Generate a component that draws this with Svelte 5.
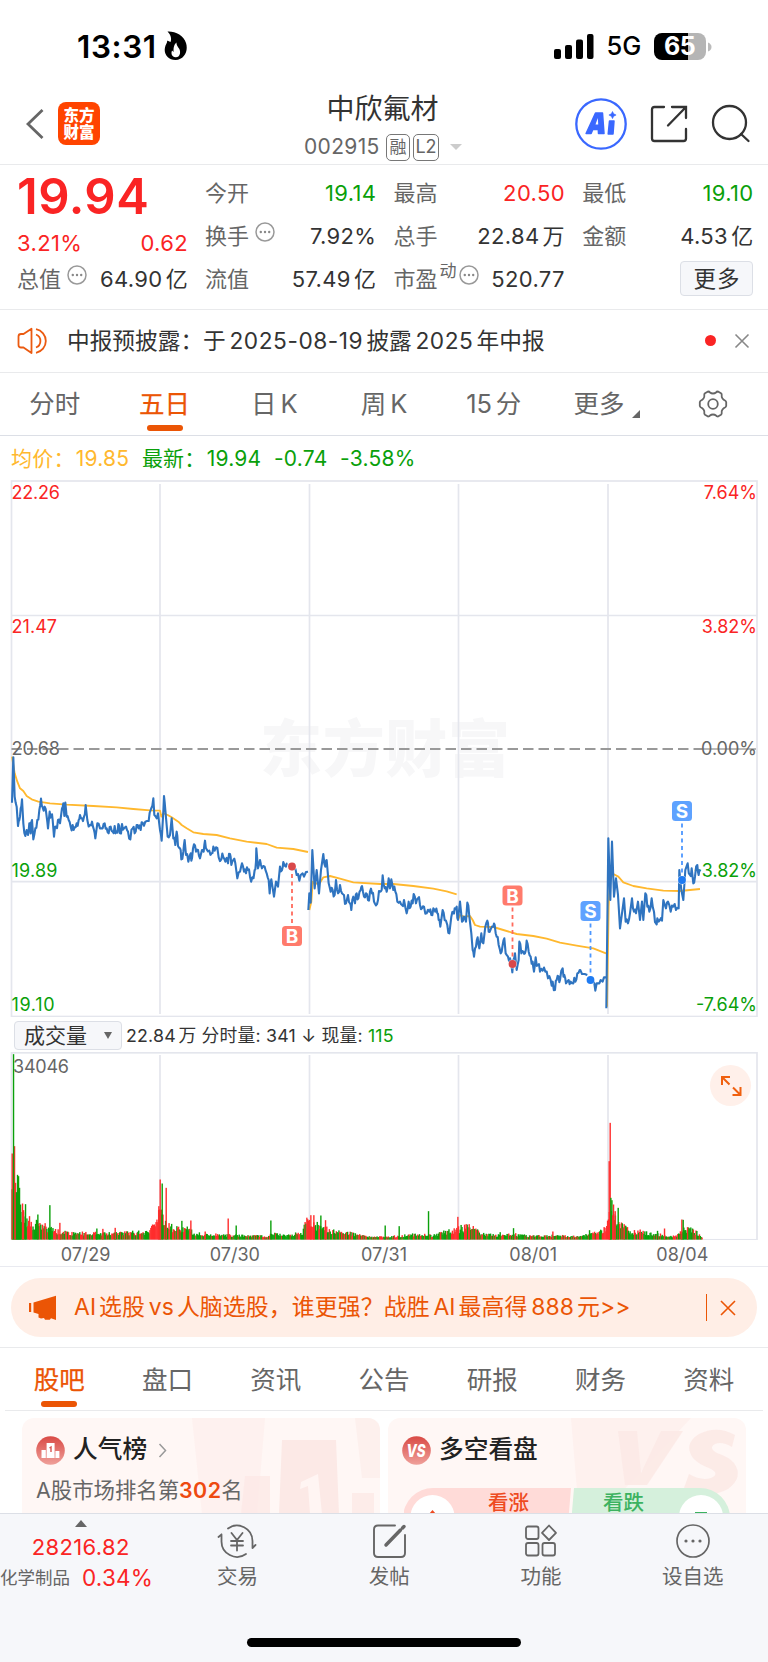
<script>
  const split = (t) => t.match(/[\u2190-\u2193\u3000-\u9fff\uff00-\uffef]+|[^\u2190-\u2193\u3000-\u9fff\uff00-\uffef]+/g);
  const isLatin = (t) => /^[\x20-\x7e]+$/.test(t);

  const quotes = [
    { label: '今开', value: '19.14', tone: 'down' },
    { label: '最高', value: '20.50', tone: 'up' },
    { label: '最低', value: '19.10', tone: 'down' },
    { label: '换手', value: '7.92%', info: true },
    { label: '总手', value: '22.84万' },
    { label: '金额', value: '4.53亿' },
    { label: '流值', value: '57.49亿' },
    { label: '市盈', value: '520.77', sup: '动', info: true }
  ];
  const periods = ['分时', '五日', '日K', '周K', '15分', '更多'];
  const sections = ['股吧', '盘口', '资讯', '公告', '研报', '财务', '资料'];
  const dates = ['07/29', '07/30', '07/31', '08/01', '08/04'];
  const gridX = [160, 309.5, 458.5, 608];

  // Series are stored at three units per pixel.
  const rand = (n) => {
    const v = Math.sin(n * 12.9898 + 4.137) * 43758.5453;
    return v - Math.floor(v);
  };
  const shift = (s, dx) => s.split(' ').map((p) => {
    const [x, y] = p.split(',').map(Number);
    return [x + dx, y];
  });
  const plain = (pts) => pts.map((p) => p.join(',')).join(' ');
  const dense = (pts) => {
    const out = [];
    pts.forEach((p, i) => {
      out.push(p);
      const q = pts[i + 1];
      if (q && q[0] - p[0] > 3 && Math.abs(q[1] - p[1]) < 45) {
        const j = (rand(p[0] + 3) - 0.5) * 30;
        out.push([(p[0] + q[0]) / 2, (p[1] + q[1]) / 2 + j]);
      }
    });
    return plain(out);
  };

  const price = [
    dense(shift('36,248 40,112 44,230 50,260 54,318 58,300 62,265 66,238 70,310 76,348 80,330 84,345 88,310 92,340 96,300 100,358 106,325 112,300 118,270 123,236 128,262 134,260 140,290 144,325 149,275 154,290 158,300 162,350 168,320 174,300 180,310 186,265 190,250 193,288 196,248 200,290 206,300 212,320 218,315 224,322 230,310 236,300 240,285 246,295 252,290 257,255 262,300 270,315 276,305 282,330 286,355 292,310 300,325 308,325 314,310 320,325 326,340 332,320 338,335 344,318 350,335 355,312 360,340 366,312 372,325 378,320 384,335 391,358 398,325 404,340 410,315 416,325 422,330 428,308 436,305 446,303 452,270 457,258 460,235 463,285 470,295 474,280 480,330 485,362 490,275 492,228 496,270 503,350 510,345 515,295 520,355 526,375 530,335 534,378 540,385 544,418 550,395 554,360 558,405 565,425 572,400 576,415 582,373 588,395 594,390 600,415 606,390 611,395 615,362 620,388 628,392 635,400 640,380 648,382 656,412 664,418 670,412 676,425 684,430 690,402 694,435 700,420 706,430 712,475 720,455 726,430 732,455 738,460 744,450 750,470 757,472 764,450 768,425 769,385 774,445 780,420 786,445 794,440 800,460 806,480 809,520 814,478 822,530 828,485 834,500 840,440 846,450 850,426 858,440 862,432', 0)),
    plain(shift('886,445 890,465 894,462 898,482 902,465 908,460 912,470 918,456 924,455', 0)),
    dense(shift('25,570 28,520 32,548 37,390 44,505 50,450 57,520 63,450 70,402 76,440 80,420 86,490 92,515 98,510 104,525 108,480 114,520 120,495 126,520 132,525 138,550 144,525 150,550 154,570 160,530 165,550 170,520 175,535 182,510 186,498 192,530 198,520 204,540 210,515 216,520 222,545 228,556 234,540 240,515 245,510 248,466 254,505 260,515 266,475 270,505 274,478 280,510 286,515 292,545 300,545 306,555 312,540 320,580 326,545 332,560 338,550 341,522 348,550 354,535 360,555 366,565 372,560 380,580 388,575 394,585 400,565 406,575 412,580 416,600 421,620 428,570 434,600 442,615 448,640 454,590 460,575 464,565 470,560 474,600 480,545 486,605 492,590 498,605 502,548 508,590 514,640 518,690 522,710 528,680 533,652 538,685 544,640 550,670 556,620 562,602 566,635 572,628 580,620 584,615 590,650 596,675 602,700 608,675 613,655 617,700 624,710 630,715 637,757 640,720 645,700 650,750 656,720 658,665 664,700 670,695 675,700 680,662 686,695 692,710 698,725 702,755 707,712 714,735 720,755 728,752 736,755 744,775 752,780 758,785 765,810 770,780 776,770 780,780 788,745 793,765 798,790 806,780 812,785 820,790 826,785 832,760 840,748', 900)),
    plain(shift('840,748 843,755 846,762 854,762 862,765', 900)),
    plain(shift('880,785 883,790 886,812 890,790 898,790 902,780 908,785 912,772 918,772', 900)),
    dense(shift('139,865 145,355 151,540 156,365 162,530 168,475 174,525 180,625 186,580 192,535 197,605 204,610 210,580 216,535 222,575 228,580 234,545 240,600 246,545 250,600 256,520 262,560 268,575 275,535 282,575 288,610 292,595 300,600 306,602 310,540 318,565 324,545 332,575 340,560 348,570 356,565 358,450 364,510 370,540 376,450 383,430 390,465 395,445 400,490 405,470 412,435 416,465 420,455', 1680))
  ];

  const average = [
    plain(shift('36,110 44,160 52,185 60,205 70,213 80,228 95,238 115,245 150,250 200,254 280,258 350,262 400,267 450,271 480,272 484,290 490,280 503,285 515,292 535,305 545,315 560,325 580,337 610,342 650,345 690,355 740,365 800,372 830,383 880,387 924,396', 0)),
    plain(shift('28,570 34,545 38,485 44,492 60,488 70,472 90,468 120,476 160,487 240,492 280,492 340,498 400,506 440,514 470,523', 900)),
    plain(shift('474,600 480,585 490,590 510,588 518,600 525,615 540,620 580,621 610,630 650,642 700,648 740,656 780,668 830,677 880,685 918,700', 900)),
    plain(shift('141,860 146,560 150,480 160,462 175,470 190,487 220,498 260,505 310,512 360,513 390,510 420,507', 1680))
  ];

  const envelope = [[36, 150], [60, 100], [72, 75], [90, 55], [110, 58], [130, 48], [160, 34], [190, 24], [250, 22], [340, 20], [400, 25], [440, 24], [455, 42], [470, 66], [482, 100], [492, 70], [505, 50], [520, 40], [555, 40], [590, 20], [640, 17], [700, 15], [800, 11], [830, 24], [850, 15], [905, 22], [920, 62], [945, 54], [970, 40], [1000, 28], [1050, 22], [1100, 10], [1150, 9], [1200, 13], [1250, 18], [1300, 14], [1340, 28], [1370, 34], [1385, 42], [1420, 42], [1440, 20], [1500, 14], [1540, 18], [1600, 12], [1660, 14], [1740, 10], [1780, 25], [1810, 30], [1824, 60], [1834, 115], [1850, 65], [1870, 45], [1890, 28], [1930, 24], [1970, 20], [2000, 11], [2030, 12], [2050, 34], [2065, 38], [2080, 30], [2100, 17], [2108, 7]];
  const level = (x) => {
    let i = 0;
    while (i < envelope.length - 2 && envelope[i + 1][0] < x) i++;
    const [a, b] = [envelope[i], envelope[i + 1]];
    return a[1] + ((b[1] - a[1]) * (x - a[0])) / (b[0] - a[0]);
  };
  const spikes = [[36, 258, 1], [43, 280, 1], [46, 170, 1], [49, 142, 0], [52, 194, 0], [55, 190, 0], [58, 155, 0], [61, 105, 0], [67, 108, 1], [70, 88, 1], [76, 106, 0], [88, 70, 1], [113, 75, 0], [149, 103, 0], [179, 50, 1], [290, 33, 0], [308, 32, 1], [345, 35, 1], [476, 100, 1], [480, 180, 1], [486, 168, 0], [498, 155, 1], [545, 56, 0], [572, 57, 1], [615, 24, 1], [684, 63, 1], [708, 42, 0], [812, 57, 0], [932, 73, 1], [941, 73, 1], [962, 72, 0], [976, 58, 1], [1155, 42, 0], [1197, 40, 0], [1285, 85, 0], [1373, 68, 1], [1398, 46, 1], [1407, 46, 1], [1540, 34, 0], [1500, 22, 0], [1658, 24, 1], [1768, 28, 0], [1827, 235, 1], [1830, 350, 1], [1832, 125, 0], [1840, 105, 1], [1845, 85, 1], [1854, 95, 0], [1872, 46, 1], [1920, 30, 1], [1972, 26, 0], [1993, 33, 1], [2045, 60, 1], [2049, 59, 0], [2062, 37, 1], [40, 556, 0]];
  const reds = [[82, 90], [448, 478], [918, 944], [1352, 1376], [1806, 1828]];
  const bars = [];
  for (let i = 0, x = 36; x < 2108; i++, x += 2.6) {
    const h = Math.max(6, level(x) * (0.5 + 0.6 * rand(i * 1.7 + 9)));
    const red = reds.some(([a, b]) => x > a && x < b) || (x > 90 && rand(i * 3.1 + 2) < 0.36);
    bars.push([x, h, red ? 1 : 0]);
  }
  bars.push(...spikes);

  const markers = [
    { x: 292, dot: 866.5, tag: 936, t: 'B' },
    { x: 512.5, dot: 964, tag: 895.5, t: 'B' },
    { x: 590.5, dot: 980, tag: 911, t: 'S' },
    { x: 682, dot: 880, tag: 811, t: 'S' }
  ];
  const scale = [
    ['22.26', '7.64%', 499, 'up', 48.5],
    ['21.47', '3.82%', 633, 'up', 45.5],
    ['20.68', '0.00%', 755, 'flat', 48.5],
    ['19.89', '-3.82%', 876.5, 'down', 46],
    ['19.10', '-7.64%', 1010.5, 'down', 43]
  ];
</script>

{#snippet mixed(t)}{#each split(t) as p, i}<span class:lat={isLatin(p)} class:gl={i > 0 && isLatin(p) && p[0] !== '>'} class:gr={i < split(t).length - 1 && isLatin(p)}>{p}</span>{/each}{/snippet}

{#snippet info()}
  <svg class="info" width="20" height="20" viewBox="0 0 20 20"><circle cx="10" cy="10" r="9" fill="none" stroke="#999" stroke-width="1.500" /><g fill="#888"><circle cx="5.8" cy="10" r="1.200" /><circle cx="10" cy="10" r="1.200" /><circle cx="14.2" cy="10" r="1.200" /></g></svg>
{/snippet}

<div class="screen">
  <div class="status">
    <span class="clock">13:31</span>
    <svg class="flame" width="24" height="30" viewBox="0 0 24 30"><path d="M3.5 0.5C11 0 20 4.500 22 12c2.500 8-1.500 16.500-10.500 17C4 29-.5 23 1 16.500 1.500 13.500 3.300 12 3.200 9.500L6.500 11C8 7 6.500 3.500 3.500.5Z" /><path fill="#fff" d="M12.500 11.500C12 16 17 17 16 22.500 15.300 25.500 13.500 26.500 11.500 26.300 8 26 6.700 22.500 8 19.500L9.600 21C9.500 17.500 9.500 14 12.500 11.500Z" /></svg>
    <svg class="signal" width="40" height="26" viewBox="0 0 40 26"><rect x="0" y="15" width="7" height="10" rx="2" /><rect x="11" y="11" width="7" height="14" rx="2" /><rect x="22" y="5.500" width="7" height="19.500" rx="2" /><rect x="33" y="0" width="6.500" height="25" rx="2" /></svg>
    <span class="net">5G</span>
    <span class="battery">65</span>
    <svg class="nub" width="6" height="10" viewBox="0 0 6 10"><path d="M1 0.500Q4.500 2 4.500 5T1 9.500Z" fill="#bbb" /></svg>
  </div>

  <header>
    <svg class="back" width="18" height="32" viewBox="0 0 18 32"><path d="M16.500 2 2 16 16.500 30" fill="none" stroke="#666" stroke-width="2.800" /></svg>
    <div class="logo"><span>东方</span><span>财富</span></div>
    <div class="name">
      <h1>中欣氟材</h1>
      <div class="code"><span>002915</span><i>融</i><i class="l2">L2</i><b></b></div>
    </div>
    <div class="tools">
      <svg width="52" height="52" viewBox="0 0 52 52"><circle cx="26" cy="26" r="24.700" fill="none" stroke="#3a68ff" stroke-width="2.300" /><g fill="#3a68ff" stroke="#3a68ff" stroke-linejoin="round"><path d="M20.500 15h7l1.500 20.500h-5.500l-.2-4h-5.500l-1.700 4h-5Z" stroke-width="1.500" /><path d="M34.500 23h4.500l-1 13h-4.800Z" stroke-width="1.500" /><path d="m37.500 13.500 1.200 2.300 2.400 1.200-2.400 1.200-1.200 2.400-1.200-2.400-2.400-1.200 2.400-1.200Z" stroke-width=".6" /></g><path d="M20.500 26.500 22.800 20l.4 6.500Z" fill="#fff" /></svg>
      <svg width="38" height="38" viewBox="0 0 38 38" fill="none" stroke="#333" stroke-width="2.300" stroke-linecap="round"><path d="M14 2H4.500Q2 2 2 4.500V33.500Q2 36 4.500 36h29q2.500 0 2.500-2.500V24M22 2h14V13M36 2 18 20.500" /></svg>
      <svg width="40" height="40" viewBox="0 0 40 40" fill="none" stroke="#333" stroke-width="2.300" stroke-linecap="round"><circle cx="18.500" cy="18.500" r="16.500" /><path d="m30 30 7.500 7" /></svg>
    </div>
  </header>

  <section class="quote">
    <div class="last">
      <strong>19.94</strong>
      <div class="pair up"><span>3.21%</span><span>0.62</span></div>
      <div class="pair cap"><span class="label">总值{@render info()}</span><span class="num">{@render mixed('64.90亿')}</span></div>
    </div>
    <div class="cells">
      {#each quotes as q}
        <div class="cell"><span class="label">{q.label}{#if q.sup}<sup>{q.sup}</sup>{/if}{#if q.info}{@render info()}{/if}</span><span class="num {q.tone}">{@render mixed(q.value)}</span></div>
      {/each}
      <div class="cell"><button class="more">更多</button></div>
    </div>
  </section>

  <div class="notice">
    <svg width="32" height="28" viewBox="0 0 32 28" fill="none" stroke="#eb5a10" stroke-width="1.800" stroke-linejoin="round"><path d="M14.500 1.800V26L6.500 20.500H4q-2.500 0-2.500-2.500v-8.500Q1.500 7 4 7h2.500ZM19 7.500a7 7 0 0 1 0 13M19 2.200a12 12 0 0 1 0 23.600" /></svg>
    <p>{@render mixed('中报预披露：于2025-08-19披露2025年中报')}</p>
    <em></em>
    <svg width="16" height="16" viewBox="0 0 16 16"><path d="m1.500 1.500 13 13m0-13-13 13" stroke="#888" stroke-width="1.600" /></svg>
  </div>

  <nav class="periods">
    {#each periods as p, i}
      <div class="tab" class:active={i === 1} class:menu={i === 5}><span>{@render mixed(p)}</span>{#if i === 5}<svg width="8" height="8" viewBox="0 0 8 8"><path d="M8 0v8H0Z" fill="#666" /></svg>{/if}</div>
    {/each}
    <div class="tab"><svg class="gear" width="30" height="28" viewBox="0 0 30 28" fill="none" stroke="#666" stroke-width="1.800" stroke-linejoin="round"><path d="M10 1.500q1.500 0 2 1 1.200 1 3 1t3-1q.5-1 2-1l3 1.800q1 .8.700 2.200-.3 1.500.8 3t2.500 2q1 .5 1.200 1.600v3.800q-.2 1.100-1.200 1.600-1.400.5-2.500 2t-.8 3q.3 1.400-.7 2.200l-3 1.800q-1.500 0-2-1-1.200-1-3-1t-3 1q-.5 1-2 1l-3-1.800q-1-.8-.7-2.200.3-1.500-.8-3t-2.500-2q-1-.5-1.200-1.600v-3.800q.2-1.100 1.200-1.600 1.400-.5 2.500-2t.8-3q-.3-1.400.7-2.200Z" /><circle cx="15" cy="14" r="4.800" /></svg></div>
  </nav>

  <div class="legend"><span class="avg">均价：<u>19.85</u></span><span>最新：<u>19.94</u></span><span>-0.74</span><span>-3.58%</span></div>

  <svg class="chart" width="768" height="537" viewBox="0 480 768 537">
    <text x="260" y="772" class="mark" textLength="250">东方财富</text>
    <g stroke="#e4e6ed" stroke-width="1.700" fill="none">
      <rect x="11.500" y="481" width="745.500" height="535.500" />
      {#each gridX as x}<path d="M{x} 484V1014" />{/each}
      <path d="M11 615.500H757M11 881.700H757" />
    </g>
    <path d="M11.500 749H702" stroke="#999" stroke-width="1.900" stroke-dasharray="10.500 5" />
    <path d="M702 749H756" stroke="#777" stroke-width="1.200" />
    {#each scale as [l, r, y, tone, w]}
      <text x="11.500" {y} class={tone} textLength={w}>{l}</text>
      <text x="757" {y} class={tone} text-anchor="end">{r}</text>
    {/each}
    <g transform="translate(0 720) scale(.33333)" fill="none" stroke-linejoin="round">
      {#each average as p}<polyline points={p} stroke="#ffb82e" stroke-width="5.500" />{/each}
      {#each price as p}<polyline points={p} stroke="#2f74c0" stroke-width="6.300" />{/each}
    </g>
    {#each markers as m}
      {@const buy = m.t === 'B'}
      <path d="M{m.x} {m.dot}V{m.tag}" stroke={buy ? '#ff6a5c' : '#4d97ff'} stroke-width="1.800" stroke-dasharray="4 3.500" />
      <circle cx={m.x} cy={m.dot} r="4.600" fill="#fff" opacity=".7" />
      <circle cx={m.x} cy={m.dot} r="3.900" fill={buy ? '#d9484a' : '#1f7bf2'} />
      <rect x={m.x - 10} y={m.tag - 10} width="20" height="20" rx="3.500" fill={buy ? '#ff7b6c' : '#5ea2ff'} />
      <text x={m.x} y={m.tag + 7} class="tag" text-anchor="middle">{m.t}</text>
    {/each}
  </svg>

  <div class="volbar">
    <button>成交量<b></b></button>
    <p>{@render mixed('22.84万')} 分时量: 341 ↓ 现量: <span class="down">115</span></p>
  </div>

  <div class="volume">
    <svg width="768" height="188" viewBox="0 1052 768 188">
      <g stroke="#e4e6ed" stroke-width="1.700" fill="none">
        <rect x="11.500" y="1052.800" width="745.500" height="187" />
        {#each gridX as x}<path d="M{x} 1055V1239" />{/each}
      </g>
      <text x="13" y="1072.500" class="flat" textLength="56">34046</text>
      <g transform="translate(0 1239.500) scale(.33333)">
        {#each bars as [x, h, red]}<rect x={x - 1.5} y={-h} width="4.200" height={h} fill={red ? '#ff2d2d' : '#0aa00a'} />{/each}
      </g>
    </svg>
    <span class="expand"><svg width="22" height="22" viewBox="0 0 22 22" fill="none" stroke="#f0600f" stroke-width="2"><path d="M2 10V2h8M2 2l7.500 7.500M12.500 20h8v-8M20.500 20 13 12.500" /></svg></span>
  </div>
  <div class="dates">{#each dates as d}<span>{d}</span>{/each}</div>

  <div class="promo">
    <div class="pill">
      <svg width="28" height="26" viewBox="0 0 28 26" fill="#eb5505"><path d="M0 8h2.200v9H0ZM4.500 7.500 27 .8V25l-5-1.800-1.200 1.600H16l-1-1.800-3 .6-2.500-1.100V19l-5-1.500Z" /></svg>
      <p>{@render mixed('AI选股vs人脑选股，谁更强？战胜AI最高得888元>>')}</p>
      <i></i>
      <svg width="16" height="16" viewBox="0 0 16 16"><path d="m1 1 14 14m0-14-14 14" stroke="#eb5505" stroke-width="1.600" /></svg>
    </div>
  </div>

  <nav class="sections">
    {#each sections as s, i}<div class="tab" class:active={i === 0}><span>{s}</span></div>{/each}
  </nav>

  <div class="cards">
    <article>
      <svg class="art" width="358" height="96" viewBox="0 0 358 96" fill="#fce9e6"><path d="M170 0h73l-8 96h-55Z" opacity=".4" /><path d="M223 58h25v38h-29Z" opacity=".8" /><path d="M260 22h54l3 74h-60Z" /><path d="M279 64l17-8 4 40h-12l-2-28-8 3Z" fill="#fff5f3" /><path d="M333 0h25v60h-18Z" opacity=".5" /><path d="M330 75h22v21h-22Z" opacity=".8" /></svg>
      <h2><svg width="29" height="29" viewBox="0 0 29 29"><defs><linearGradient id="badge" x2="0" y2="1"><stop stop-color="#d94a45" /><stop offset="1" stop-color="#efa09a" /></linearGradient></defs><circle cx="14.500" cy="14.500" r="14.300" fill="url(#badge)" /><path fill="#fff" d="M5.500 14h4.300v8H5.500ZM10.600 7h8v15h-8ZM19.400 15h4v7h-4Z" /><path d="m13.500 12 1.500-1v5" fill="none" stroke="#d95550" stroke-width="1.400" /></svg>人气榜<svg class="go" width="9" height="15" viewBox="0 0 9 15"><path d="m1.500 1 6 6.500-6 6.500" fill="none" stroke="#999" stroke-width="1.500" /></svg></h2>
      <p>A股市场排名第<b>302</b>名</p>
    </article>
    <article>
      <svg class="art" width="358" height="96" viewBox="0 0 358 96" fill="#fce9e6"><path d="M183 0h120l-90 96h-22Z" opacity=".45" /><path d="M230 13h19l4 42 20-42h22l-36 54h-22Z" opacity=".9" /><path d="M347 17q-18-10-36-1-16 10-6 24 5 6 18 11 9 5 0 9-10 3-22-4l-5 14q24 12 44 1 16-12 6-26-5-6-17-10-9-5-2-9 7-3 17 3Z" opacity=".9" /></svg>
      <h2><svg width="29" height="29" viewBox="0 0 29 29"><circle cx="14.500" cy="14.500" r="14.300" fill="url(#badge)" /><text x="14" y="20.500" text-anchor="middle" class="vs" textLength="19" lengthAdjust="spacingAndGlyphs">VS</text></svg>多空看盘</h2>
      <div class="vote"><svg width="326" height="60" viewBox="0 0 326 60"><path d="M29 0H167L162 60H29A29 29 0 0 1 29 0Z" fill="#ffdbd8" /><path d="M170 0H296a29 29 0 0 1 0 60H165Z" fill="#d5f0dc" /><circle cx="28.500" cy="29" r="22" fill="#fff" /><circle cx="297" cy="29" r="22" fill="#fff" /><path d="m28.500 22 8 9h-16Z" fill="#ee4a20" /><path d="M291 24h12v3h-12Z" fill="#3cb260" /></svg><span class="bull">看涨</span><span class="bear">看跌</span></div>
    </article>
  </div>

  <footer>
    <div class="bar">
      <div class="index"><b></b><strong>28216.82</strong><p>化学制品<span>0.34%</span></p></div>
      <div class="item"><svg width="40" height="34" viewBox="0 0 40 34" fill="none" stroke="#666" stroke-width="1.800" stroke-linecap="round"><path d="M11 4.500A15.500 15.500 0 0 1 35.500 17v7M35.500 24l3-3M29 30A15.500 15.500 0 0 1 4.500 17v-6.500M4.500 10.500 1.500 13M14.500 9l5.500 7 5.500-7M14 17h12M14 21.500h12M20 16v10.500" /></svg><span>交易</span></div>
      <div class="item"><svg width="40" height="34" viewBox="0 0 40 34" fill="none" stroke="#666" stroke-width="1.900" stroke-linecap="round"><path d="M26 1.500H9q-4 0-4 4V29q0 4 4 4h23q4 0 4-4V11" /><path d="m17 21 14.500-15" stroke-width="3.500" /><path d="m33.500 4 1.500-1.500" stroke-width="3.500" /></svg><span>发帖</span></div>
      <div class="item"><svg width="40" height="34" viewBox="0 0 40 34" fill="none" stroke="#666" stroke-width="1.800" stroke-linejoin="round"><rect x="5" y="2.500" width="12.500" height="12.500" rx="2" /><rect x="5" y="19" width="12.500" height="12.500" rx="2" /><rect x="21.500" y="19" width="12.500" height="12.500" rx="2" /><path d="m28 1.500 7 7.300-7 7.200-7-7.200Z" /></svg><span>功能</span></div>
      <div class="item"><svg width="40" height="34" viewBox="0 0 40 34"><circle cx="20" cy="17" r="16" fill="none" stroke="#666" stroke-width="1.700" /><g fill="#666"><circle cx="13" cy="17" r="1.600" /><circle cx="20" cy="17" r="1.600" /><circle cx="27" cy="17" r="1.600" /></g></svg><span>设自选</span></div>
    </div>
    <div class="home"></div>
  </footer>
</div>

<style>
  :global(body) { margin: 0; background: #fff; }
  .screen { width: 768px; height: 1662px; overflow: hidden; display: flex; flex-direction: column; background: #fff; color: #333; font-family: Inter, "Noto Sans CJK SC", sans-serif; font-size: 22px; line-height: 1.2; }
  .screen > * { flex: none; box-sizing: border-box; }
  h1, h2, p { margin: 0; font-weight: 400; white-space: nowrap; }
  i, em { font-style: normal; }
  u { text-decoration: none; margin-left: 1px; }
  svg { flex: none; display: block; }
  button { font: inherit; color: inherit; padding: 0; box-sizing: border-box; background: #f6f7fa; border: 1.500px solid #dcdfe6; border-radius: 4px; }
  .gl { margin-left: .16em; }
  .gr { margin-right: .14em; }
  .up { color: #fa2424; fill: #fa2424; }
  .down { color: #0aa00a; fill: #0aa00a; }
  .flat { fill: #666; }

  .status { height: 84px; padding: 9px 0 0 77px; display: flex; align-items: center; color: #000; }
  .clock { width: 87px; font-size: 31.500px; font-weight: 600; letter-spacing: .6px; white-space: nowrap; }
  .signal { margin: 0 13px 0 365.500px; }
  .net { width: 47px; font-size: 25.500px; font-weight: 500; }
  .battery { width: 52px; height: 27px; line-height: 27px; border-radius: 8px; background: linear-gradient(90deg, #000 66%, #b5b5b5 66%); color: #fff; text-align: center; font-size: 25px; font-weight: 700; letter-spacing: -.5px; margin: 0 1px 0 0; }
  .flame { margin-top: -2px; }

  header { height: 81px; padding: 0 18px 0 26px; display: grid; grid-template-columns: 32px 180px 1fr 180px; align-items: center; border-bottom: 1.500px solid #e9eaec; }
  .logo { width: 42px; height: 43px; margin-top: -1px; border-radius: 8px; background: #ff4400; color: #fff; display: flex; flex-direction: column; align-items: center; justify-content: center; font-size: 15.500px; font-weight: 900; line-height: 17px; }
  .name { display: flex; flex-direction: column; align-items: center; margin: 7px 0 0 -43px; }
  h1 { font-size: 28px; line-height: 32px; }
  .code { display: flex; align-items: center; height: 30px; margin: 7px 0 0 1px; color: #666; font-size: 21px; }
  .code span { width: 82px; letter-spacing: .35px; }
  .code i { width: 24px; height: 27px; box-sizing: border-box; border: 1.500px solid #777; border-radius: 5px; font-size: 17px; line-height: 24px; text-align: center; margin-right: 3px; }
  .code .l2 { width: 26px; font-size: 18px; margin-right: 11px; }
  .code b { border: 6px solid transparent; border-top-color: #ccc; border-bottom: 0; }
  .tools { display: flex; align-items: center; justify-content: space-between; width: 176px; margin-left: 5px; height: 52px; }

  .quote { height: 145px; padding: 0 15px 0 17px; display: grid; grid-template-columns: 171px 1fr; column-gap: 17px; border-bottom: 1.500px solid #e9eaec; }
  .last strong { display: block; height: 58px; line-height: 64px; font-size: 49px; font-weight: 600; letter-spacing: .5px; color: #fa2424; }
  .pair { display: flex; justify-content: space-between; height: 40px; align-items: center; letter-spacing: .35px; }
  .num { letter-spacing: .35px; }
  .cap { margin-top: -3px; height: 38px; }
  .cells { padding-top: 7px; display: grid; grid-template-columns: repeat(3, 171.300px); grid-auto-rows: 43px; column-gap: 17.300px; }
  .cell { display: flex; justify-content: space-between; align-items: center; }
  .label { display: flex; align-items: center; color: #666; letter-spacing: 0; }
  .info { margin: -8px 0 0 6px; }
  sup + .info { margin-left: 2px; }
  sup { font-size: 17px; line-height: 17px; margin: -15px 0 0 2px; vertical-align: baseline; }
  .more { width: 73px; height: 35px; margin: -3px 0 0 auto; font-size: 22.500px; letter-spacing: 1px; }

  .notice { height: 63px; padding: 0 18px 1px 17px; display: flex; align-items: center; border-bottom: 1.500px solid #e9eaec; font-size: 22.700px; }
  .notice p { margin-left: 18px; flex: 1; }
  .notice .lat { letter-spacing: .55px; }
  em { width: 11px; height: 11px; border-radius: 50%; background: #fa2424; margin-right: 18px; }

  .periods { height: 63px; display: grid; grid-template-columns: repeat(7, 1fr); border-bottom: 1.500px solid #dcdfe6; }
  .tab { display: flex; justify-content: center; align-items: center; position: relative; color: #666; font-size: 25.500px; }
  .menu { padding-left: 7px; }
  .tab svg:not(.gear) { margin: 20px 0 0 8px; }
  .active { color: #eb5505; -webkit-text-stroke: .25px #eb5505; }
  .active::after { content: ""; position: absolute; bottom: 4px; left: calc(50% - 18px); width: 36px; height: 6px; border-radius: 3px; background: #eb5505; }

  .legend { height: 44px; padding: 2px 0 0 11px; display: flex; align-items: center; gap: 12.500px; font-size: 21px; letter-spacing: .25px; color: #0aa00a; }
  .avg { color: #ffb82e; }
  .chart text, .volume text { font-size: 18px; }
  .chart .mark { font-size: 62px; font-weight: 900; fill: #f7f7f8; }
  .chart .tag { font-size: 19px; font-weight: 700; fill: #fff; }

  .volbar { height: 35px; padding: 2px 0 0 14px; display: flex; align-items: center; gap: 4px; font-size: 17.800px; letter-spacing: .2px; }
  .volbar button { width: 108px; height: 29px; display: flex; align-items: center; justify-content: space-between; padding: 0 9px; font-size: 21px; }
  .volbar b { border: 4.500px solid transparent; border-top: 7px solid #666; border-bottom: 0; }
  .volume { position: relative; height: 188px; }
  .expand { position: absolute; left: 710px; top: 13px; width: 41px; height: 41px; border-radius: 50%; background: #fff0ea; display: grid; place-items: center; }
  .dates { height: 27px; padding: 0 11px; display: grid; grid-template-columns: repeat(5, 149.200px); text-align: center; font-size: 18px; line-height: 29.500px; color: #666; border-bottom: 1.500px solid #e9eaf0; }

  .promo { height: 81px; padding: 11px 11px 0; border-bottom: 1.500px solid #e9eaec; }
  .pill { height: 59px; border-radius: 30px; background: #ffeee6; display: flex; align-items: center; padding: 0 21px 0 18px; color: #eb5505; font-size: 22.900px; letter-spacing: .1px; }
  .pill p { flex: 1; margin-left: 17px; }
  .pill .gl { margin-left: .16em; }
  .pill .gr { margin-right: .13em; }
  .pill i { width: 1.500px; height: 27px; background: #eb5505; margin-right: 13px; }

  .sections { height: 63px; margin: 0 5px; display: grid; grid-template-columns: repeat(7, 1fr); border-bottom: 1.500px solid #e9eaec; }
  .sections .tab { padding-top: 2px; }
  .sections .active::after { bottom: 3px; }

  .cards { height: 102px; padding: 7px 22px 0; display: flex; gap: 8px; overflow: hidden; }
  article { position: relative; width: 358px; height: 120px; border-radius: 12px; background: #fff7f5; padding: 17px 0 0 14px; box-sizing: border-box; overflow: hidden; }
  .art { position: absolute; left: 0; top: 0; }
  h2 { position: relative; display: flex; align-items: center; height: 30px; font-size: 24.700px; font-weight: 500; color: #222; }
  h2 > svg:first-child { margin-right: 8px; }
  .go { margin-left: 11px; }
  article p { position: relative; font-size: 21.400px; margin-top: 10px; line-height: 30px; color: #666; }
  article p b { color: #ee4a10; font-weight: 600; letter-spacing: .4px; }
  .vs { font-size: 17px; font-weight: 800; font-style: italic; fill: #fff; }
  .vote { position: relative; margin: 23px 0 0 2px; }
  .vote span { position: absolute; top: 4px; font-size: 20.500px; line-height: 21px; font-weight: 500; }
  .bull { left: 84px; color: #ee4a20; }
  .bear { left: 199px; color: #3cb260; }

  footer { height: 150px; background: #f6f7fa; border-top: 1.500px solid #dcdfe6; position: relative; }
  .bar { display: grid; grid-template-columns: 161.500px repeat(4, 151.800px); height: 90px; }
  .index { display: flex; flex-direction: column; align-items: center; padding-top: 6px; box-sizing: border-box; color: #fa2424; }
  .index b { border: 6.500px solid transparent; border-bottom: 7px solid #666; border-top: 0; }
  .index strong { font-weight: 400; font-size: 22px; letter-spacing: .35px; line-height: 26px; margin-top: 7px; }
  .index p { display: flex; align-items: center; align-self: flex-start; margin-top: 5px; font-size: 17.500px; color: #666; line-height: 26px; }
  .index p span { color: #fa2424; font-size: 22.500px; letter-spacing: .2px; margin-left: 12px; }
  .item { display: flex; flex-direction: column; align-items: center; padding-top: 10px; color: #666; font-size: 20.500px; }
  .item span { margin-top: 7px; }
  .home { width: 274px; height: 9px; border-radius: 5px; background: #000; margin: 34px auto 0; }
</style>
